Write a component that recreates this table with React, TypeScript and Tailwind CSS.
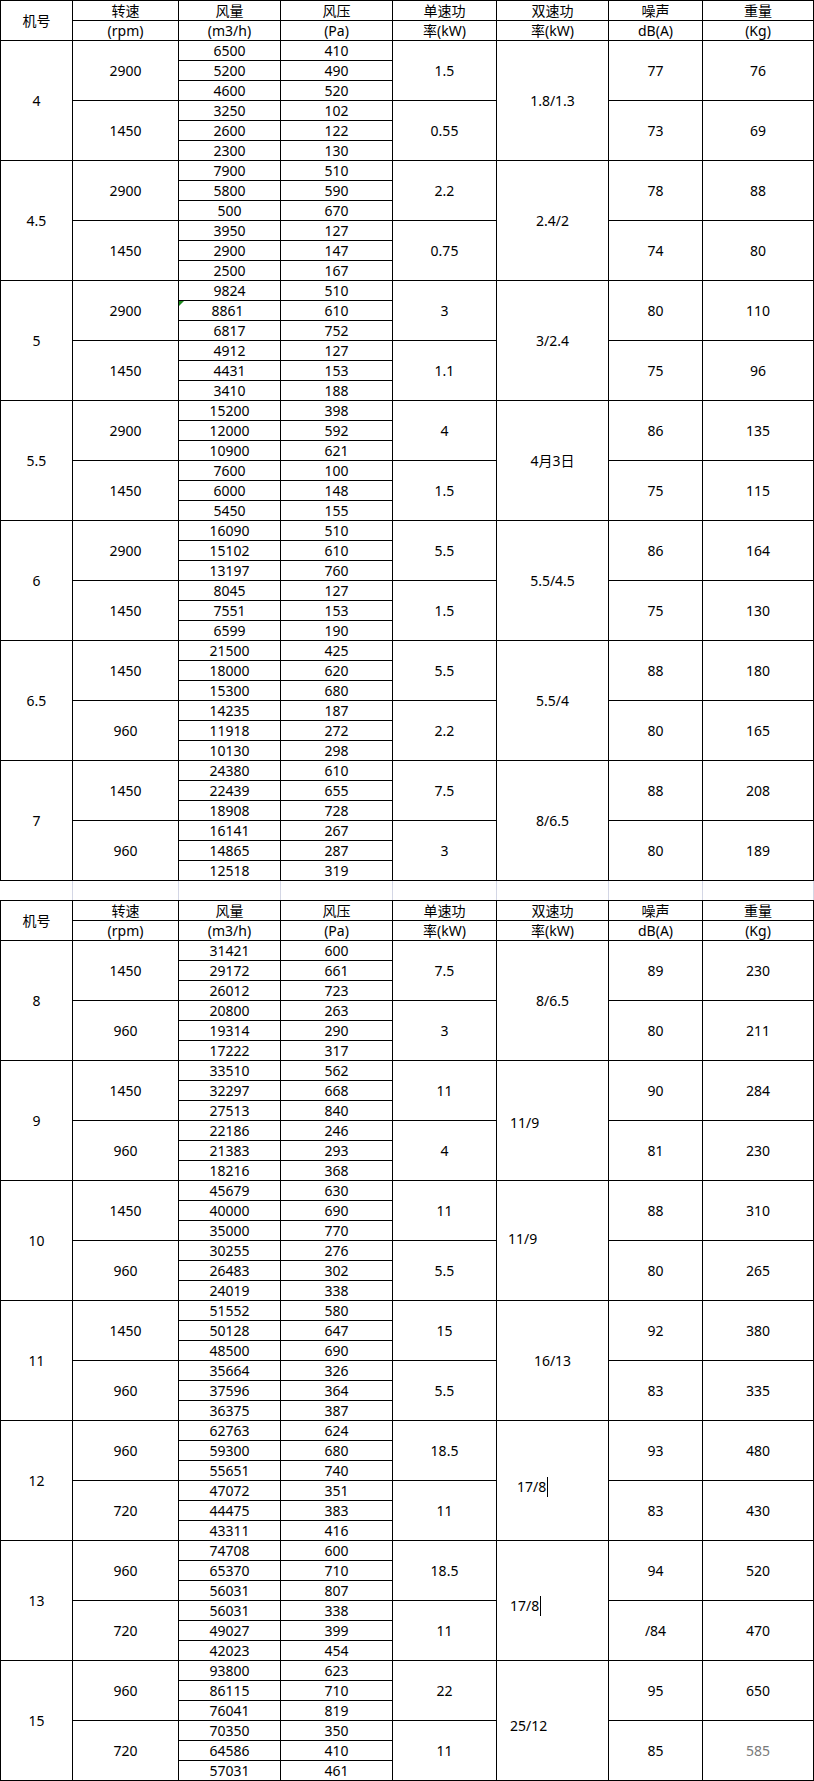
import React from "react";

type Sub = {
  speed: string;
  rows: [string, string][];
  single: string;
  noise: string;
  weight: string;
  weightClass?: string;
};

type Group = {
  no: string;
  subs: [Sub, Sub];
  dual: string;
  dualClass?: string;
  caret?: boolean;
};

const table1: Group[] = [
  {
    no: "4",
    dual: "1.8/1.3",
    subs: [
      { speed: "2900", rows: [["6500", "410"], ["5200", "490"], ["4600", "520"]], single: "1.5", noise: "77", weight: "76" },
      { speed: "1450", rows: [["3250", "102"], ["2600", "122"], ["2300", "130"]], single: "0.55", noise: "73", weight: "69" },
    ],
  },
  {
    no: "4.5",
    dual: "2.4/2",
    subs: [
      { speed: "2900", rows: [["7900", "510"], ["5800", "590"], ["500", "670"]], single: "2.2", noise: "78", weight: "88" },
      { speed: "1450", rows: [["3950", "127"], ["2900", "147"], ["2500", "167"]], single: "0.75", noise: "74", weight: "80" },
    ],
  },
  {
    no: "5",
    dual: "3/2.4",
    subs: [
      { speed: "2900", rows: [["9824", "510"], ["8861", "610"], ["6817", "752"]], single: "3", noise: "80", weight: "110" },
      { speed: "1450", rows: [["4912", "127"], ["4431", "153"], ["3410", "188"]], single: "1.1", noise: "75", weight: "96" },
    ],
  },
  {
    no: "5.5",
    dual: "4月3日",
    subs: [
      { speed: "2900", rows: [["15200", "398"], ["12000", "592"], ["10900", "621"]], single: "4", noise: "86", weight: "135" },
      { speed: "1450", rows: [["7600", "100"], ["6000", "148"], ["5450", "155"]], single: "1.5", noise: "75", weight: "115" },
    ],
  },
  {
    no: "6",
    dual: "5.5/4.5",
    subs: [
      { speed: "2900", rows: [["16090", "510"], ["15102", "610"], ["13197", "760"]], single: "5.5", noise: "86", weight: "164" },
      { speed: "1450", rows: [["8045", "127"], ["7551", "153"], ["6599", "190"]], single: "1.5", noise: "75", weight: "130" },
    ],
  },
  {
    no: "6.5",
    dual: "5.5/4",
    subs: [
      { speed: "1450", rows: [["21500", "425"], ["18000", "620"], ["15300", "680"]], single: "5.5", noise: "88", weight: "180" },
      { speed: "960", rows: [["14235", "187"], ["11918", "272"], ["10130", "298"]], single: "2.2", noise: "80", weight: "165" },
    ],
  },
  {
    no: "7",
    dual: "8/6.5",
    subs: [
      { speed: "1450", rows: [["24380", "610"], ["22439", "655"], ["18908", "728"]], single: "7.5", noise: "88", weight: "208" },
      { speed: "960", rows: [["16141", "267"], ["14865", "287"], ["12518", "319"]], single: "3", noise: "80", weight: "189" },
    ],
  },
];

const table2: Group[] = [
  {
    no: "8",
    dual: "8/6.5",
    subs: [
      { speed: "1450", rows: [["31421", "600"], ["29172", "661"], ["26012", "723"]], single: "7.5", noise: "89", weight: "230" },
      { speed: "960", rows: [["20800", "263"], ["19314", "290"], ["17222", "317"]], single: "3", noise: "80", weight: "211" },
    ],
  },
  {
    no: "9",
    dual: "11/9",
    dualClass: "justify-start pl-[13px] pt-[4px]",
    subs: [
      { speed: "1450", rows: [["33510", "562"], ["32297", "668"], ["27513", "840"]], single: "11", noise: "90", weight: "284" },
      { speed: "960", rows: [["22186", "246"], ["21383", "293"], ["18216", "368"]], single: "4", noise: "81", weight: "230" },
    ],
  },
  {
    no: "10",
    dual: "11/9",
    dualClass: "justify-start pl-[11px] pb-[3px]",
    subs: [
      { speed: "1450", rows: [["45679", "630"], ["40000", "690"], ["35000", "770"]], single: "11", noise: "88", weight: "310" },
      { speed: "960", rows: [["30255", "276"], ["26483", "302"], ["24019", "338"]], single: "5.5", noise: "80", weight: "265" },
    ],
  },
  {
    no: "11",
    dual: "16/13",
    subs: [
      { speed: "1450", rows: [["51552", "580"], ["50128", "647"], ["48500", "690"]], single: "15", noise: "92", weight: "380" },
      { speed: "960", rows: [["35664", "326"], ["37596", "364"], ["36375", "387"]], single: "5.5", noise: "83", weight: "335" },
    ],
  },
  {
    no: "12",
    dual: "17/8",
    caret: true,
    dualClass: "justify-start pl-[20px] pt-[12px]",
    subs: [
      { speed: "960", rows: [["62763", "624"], ["59300", "680"], ["55651", "740"]], single: "18.5", noise: "93", weight: "480" },
      { speed: "720", rows: [["47072", "351"], ["44475", "383"], ["43311", "416"]], single: "11", noise: "83", weight: "430" },
    ],
  },
  {
    no: "13",
    dual: "17/8",
    caret: true,
    dualClass: "justify-start pl-[13px] pt-[11px]",
    subs: [
      { speed: "960", rows: [["74708", "600"], ["65370", "710"], ["56031", "807"]], single: "18.5", noise: "94", weight: "520" },
      { speed: "720", rows: [["56031", "338"], ["49027", "399"], ["42023", "454"]], single: "11", noise: "/84", weight: "470" },
    ],
  },
  {
    no: "15",
    dual: "25/12",
    dualClass: "justify-start pl-[13px] pt-[10px]",
    subs: [
      { speed: "960", rows: [["93800", "623"], ["86115", "710"], ["76041", "819"]], single: "22", noise: "95", weight: "650" },
      { speed: "720", rows: [["70350", "350"], ["64586", "410"], ["57031", "461"]], single: "11", noise: "85", weight: "585", weightClass: "text-[#7a7a7a]" },
    ],
  },
];

function Cell({ children, className = "" }: { children?: React.ReactNode; className?: string }) {
  return (
    <div className={`relative flex items-center justify-center whitespace-nowrap border-r border-b border-black ${className}`}>
      {children}
    </div>
  );
}

const gridCols = "grid grid-cols-[72px_106px_102px_112px_104px_112px_94px_111px] auto-rows-[20px]";

function Header() {
  return (
    <>
      <Cell className="row-span-2">机号</Cell>
      <Cell>转速</Cell>
      <Cell>风量</Cell>
      <Cell>风压</Cell>
      <Cell>单速功</Cell>
      <Cell>双速功</Cell>
      <Cell>噪声</Cell>
      <Cell>重量</Cell>
      <Cell>(rpm)</Cell>
      <Cell>(m3/h)</Cell>
      <Cell>(Pa)</Cell>
      <Cell>率(kW)</Cell>
      <Cell>率(kW)</Cell>
      <Cell>dB(A)</Cell>
      <Cell>(Kg)</Cell>
    </>
  );
}

function GroupRows({ g }: { g: Group }) {
  const out: React.ReactNode[] = [];
  g.subs.forEach((s, si) => {
    s.rows.forEach((r, ri) => {
      if (ri === 0) {
        if (si === 0) out.push(<Cell key={`no`} className="row-span-6">{g.no}</Cell>);
        out.push(<Cell key={`sp${si}`} className="row-span-3">{s.speed}</Cell>);
      }
      const special = r[0] === "8861";
      out.push(
        <Cell key={`f${si}${ri}`} className={special ? "pr-[4px]" : ""}>
          {special && (
            <span className="absolute left-0 top-0 h-0 w-0 border-t-[5px] border-r-[5px] border-t-[#1e8a1e] border-r-transparent" />
          )}
          {r[0]}
        </Cell>
      );
      out.push(<Cell key={`p${si}${ri}`}>{r[1]}</Cell>);
      if (ri === 0) {
        out.push(<Cell key={`s${si}`} className="row-span-3">{s.single}</Cell>);
        if (si === 0)
          out.push(
            <Cell key="dual" className={`row-span-6 ${g.dualClass ?? ""}`}>
              {g.dual}
              {g.caret && <span className="ml-[1px] inline-block h-[20px] w-px bg-black" />}
            </Cell>
          );
        out.push(<Cell key={`n${si}`} className="row-span-3">{s.noise}</Cell>);
        out.push(<Cell key={`w${si}`} className={`row-span-3 ${s.weightClass ?? ""}`}>{s.weight}</Cell>);
      }
    });
  });
  return <>{out}</>;
}

function DataTable({ groups }: { groups: Group[] }) {
  return (
    <div className={`${gridCols} border-l border-t border-black`}>
      <Header />
      {groups.map((g) => (
        <GroupRows key={g.no} g={g} />
      ))}
    </div>
  );
}

function GapRow() {
  return (
    <div className="grid h-[19px] grid-cols-[72px_106px_102px_112px_104px_112px_94px_111px] pl-px">
      {Array.from({ length: 8 }).map((_, i) => (
        <div key={i} className="border-r border-[#d3d6e4]" />
      ))}
    </div>
  );
}

export default function App() {
  return (
    <div className="w-[814px] bg-white text-[14px] leading-none text-black font-['Noto_Sans','Noto_Sans_CJK_SC',sans-serif]">
      <DataTable groups={table1} />
      <GapRow />
      <DataTable groups={table2} />
    </div>
  );
}
